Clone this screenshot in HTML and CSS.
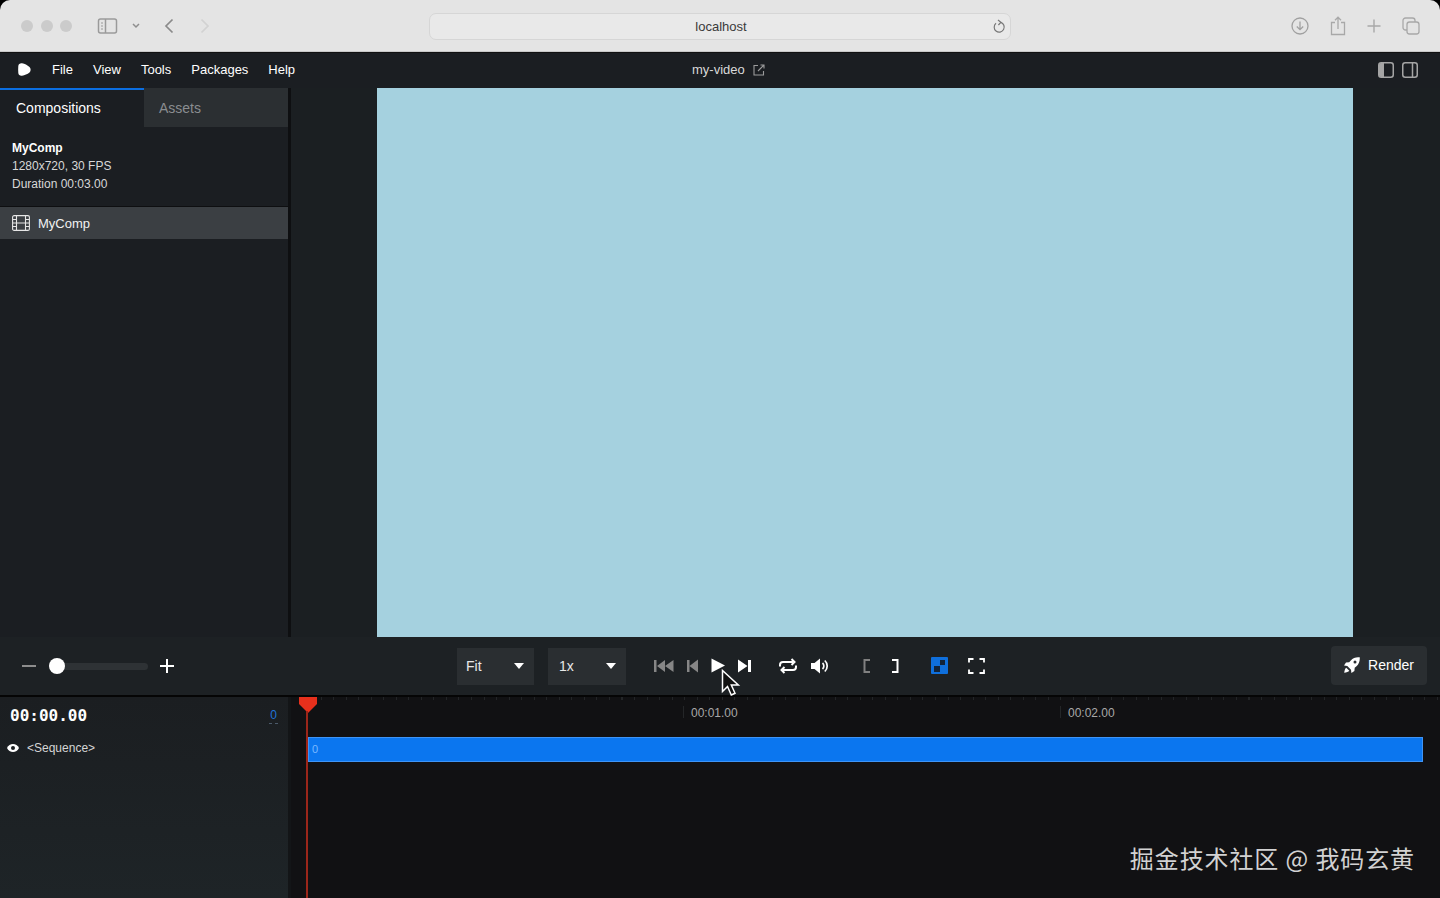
FILE: index.html
```html
<!DOCTYPE html>
<html lang="en">
<head>
<meta charset="utf-8">
<title>my-video</title>
<link rel="stylesheet" href="styles.css">
</head>
<body>
<div class="window">
  <header class="browser">
    <div class="browser-left">
      <div class="lights"><i class="light"></i><i class="light"></i><i class="light"></i></div>
      <svg class="b-sidebar" width="22" height="18" viewBox="0 0 22 18" fill="none" stroke="#9a9a9a" stroke-width="1.5"><rect x="1.5" y="2" width="18" height="14" rx="2"/><path d="M8.5 2v14"/><path d="M4 6h2M4 9h2M4 12h2" stroke-width="1.2"/></svg>
      <svg class="b-chev" width="10" height="8" viewBox="0 0 10 8" fill="none" stroke="#8e8e8e" stroke-width="1.5"><path d="M2 2l3 3 3-3"/></svg>
      <svg class="b-back" width="12" height="18" viewBox="0 0 12 18" fill="none" stroke="#8a8a8a" stroke-width="1.7"><path d="M9.5 2.5L3 9l6.5 6.5"/></svg>
      <svg class="b-fwd" width="12" height="18" viewBox="0 0 12 18" fill="none" stroke="#d2d2d2" stroke-width="1.7"><path d="M2.5 2.5L9 9l-6.5 6.5"/></svg>
    </div>
    <div class="url">
      <span class="url-text">localhost</span>
      <svg class="reload" width="14" height="16" viewBox="0 0 14 16" fill="none" stroke="#777" stroke-width="1.2"><path d="M8.8 3.4A5 5 0 1 1 4 4.3"/><path d="M6 1l2.9 2.4L6.4 6"/></svg>
    </div>
    <div class="browser-right">
      <svg width="18" height="18" viewBox="0 0 18 18" fill="none" stroke="#a0a0a0" stroke-width="1.3"><circle cx="9" cy="9" r="8"/><path d="M9 4.5v8M5.8 9.5L9 12.7l3.2-3.2"/></svg>
      <svg width="16" height="20" viewBox="0 0 16 20" fill="none" stroke="#a8a8a8" stroke-width="1.3"><path d="M5 6.5H1.500v12h13v-12H11"/><path d="M8 13V1.500M5 4.200L8 1.200l3 3"/></svg>
      <svg width="14" height="14" viewBox="0 0 14 14" fill="none" stroke="#a8a8a8" stroke-width="1.4"><path d="M7 .5v13M.5 7h13"/></svg>
      <svg width="18" height="18" viewBox="0 0 18 18" fill="none" stroke="#a8a8a8" stroke-width="1.3"><rect x="1" y="1" width="12" height="12" rx="2.5"/><rect x="5" y="5" width="12" height="12" rx="2.5" fill="#e3e3e3"/></svg>
    </div>
  </header>

  <nav class="menubar">
    <div class="menu-left">
      <svg class="logo" width="13" height="13" viewBox="0 0 13 13"><path d="M4 .3C2 .1.500 1 .3 3c-.2 2.300-.2 4.700 0 7 .2 2 1.800 3 3.700 2.700 2.800-.4 5.300-1.400 7.500-3.200 1.500-1.300 1.500-4.200 0-5.500C9.300 2.200 6.800.7 4 .3z" fill="#fff"/></svg>
      <span class="menu-item">File</span>
      <span class="menu-item">View</span>
      <span class="menu-item">Tools</span>
      <span class="menu-item">Packages</span>
      <span class="menu-item">Help</span>
    </div>
    <div class="menu-title">
      <span>my-video</span>
      <svg width="12" height="12" viewBox="0 0 12 12" fill="none" stroke="#9b9b9b" stroke-width="1.1"><path d="M5 1.500H1v9.500h9.500V7"/><path d="M5 7l6-6M7.500 1H11v3.500"/></svg>
    </div>
    <div class="menu-right">
      <svg width="16" height="16" viewBox="0 0 16 16"><rect x=".75" y=".75" width="14.500" height="14.500" rx="2.500" fill="none" stroke="#a5a5a5" stroke-width="1.500"/><path d="M1 3a2 2 0 0 1 2-2h3v14H3a2 2 0 0 1-2-2z" fill="#a5a5a5"/></svg>
      <svg width="16" height="16" viewBox="0 0 16 16" fill="none" stroke="#a5a5a5" stroke-width="1.500"><rect x=".75" y=".75" width="14.500" height="14.500" rx="2.500"/><path d="M10.500 1v14"/></svg>
    </div>
  </nav>

  <main class="workspace">
    <aside class="sidebar">
      <div class="tabs">
        <div class="tab tab-active">Compositions</div>
        <div class="tab tab-idle">Assets</div>
      </div>
      <div class="comp-info">
        <div class="comp-name">MyComp</div>
        <div>1280x720, 30 FPS</div>
        <div>Duration 00:03.00</div>
      </div>
      <div class="comp-row">
        <svg width="18" height="16" viewBox="0 0 18 16" fill="none" stroke="#e6e6e6" stroke-width="1.100"><rect x=".6" y=".6" width="16.800" height="14.800" rx="1.500"/><path d="M4.500 1v14M13.500 1v14M1 8h16M1 4.500h3.500M1 11.500h3.500M13.500 4.500H17M13.500 11.500H17M4.500 8h9"/></svg>
        <span>MyComp</span>
      </div>
    </aside>
    <section class="stage"><div class="video"></div></section>
  </main>

  <section class="controls">
    <div class="zoom">
      <svg class="z-minus" width="14" height="14" viewBox="0 0 14 14"><path d="M0 7h14" stroke="#8d8d8d" stroke-width="2"/></svg>
      <div class="slider"><i class="knob"></i></div>
      <svg width="14" height="14" viewBox="0 0 14 14"><path d="M0 7h14M7 0v14" stroke="#fff" stroke-width="2"/></svg>
    </div>
    <div class="center-controls">
      <div class="select select-fit"><span>Fit</span><i class="caret"></i></div>
      <div class="select select-speed"><span>1x</span><i class="caret"></i></div>
      <svg class="c-first" width="20" height="14" viewBox="0 0 20 14" fill="#868686"><path d="M0 1h2.500v12H0zM11 1v12L3 7zM19.500 1v12l-8.500-6z"/></svg>
      <svg class="c-prev" width="11" height="14" viewBox="0 0 11 14" fill="#868686"><path d="M0 1h2.500v12H0zM11 0.500v13L2.500 7z"/></svg>
      <svg class="c-play" width="14" height="15" viewBox="0 0 14 15" fill="#fff"><path d="M.5.500v14l13.500-7z"/></svg>
      <svg class="c-next" width="13" height="14" viewBox="0 0 13 14" fill="#fff"><path d="M0 .5v13L9.500 7zM10 1h3v12h-3z"/></svg>
      <svg class="c-loop" width="20" height="16" viewBox="0 0 20 16" fill="none" stroke="#fff" stroke-width="2"><path d="M2 8.500V7a3 3 0 0 1 3-3h10M18 7.500V9a3 3 0 0 1-3 3H5"/><path d="M13.500 1l3 3-3 3M6.500 9l-3 3 3 3"/></svg>
      <svg class="c-vol" width="19" height="16" viewBox="0 0 19 16"><path d="M0 5h3.500L9 .5v15L3.500 11H0z" fill="#fff"/><path d="M11.500 5a4 4 0 0 1 0 6M13.800 2.500a7.500 7.500 0 0 1 0 11" fill="none" stroke="#fff" stroke-width="1.700"/></svg>
      <svg class="c-in" width="8" height="14" viewBox="0 0 8 14" fill="none" stroke="#808080" stroke-width="2"><path d="M7 1H1.500v12H7"/></svg>
      <svg class="c-out" width="8" height="14" viewBox="0 0 8 14" fill="none" stroke="#fff" stroke-width="2"><path d="M1 1h5.500v12H1"/></svg>
      <svg class="c-check" width="17" height="17" viewBox="0 0 17 17"><rect width="17" height="17" rx="1" fill="#0f6fdc"/><rect x="9" y="3" width="5" height="5" fill="#12243a"/><rect x="3" y="9" width="6" height="6" fill="#12243a"/></svg>
      <svg class="c-full" width="17" height="16" viewBox="0 0 17 16" fill="none" stroke="#fff" stroke-width="1.800"><path d="M1 4.500V1h4.500M11.500 1H16v3.500M16 11.500V15h-4.500M5.500 15H1v-3.500"/></svg>
    </div>
    <button class="render" type="button">
      <svg width="16" height="16" viewBox="0 0 16 16" fill="#fff"><path d="M15.700.3c-3.500-.5-6.600.6-8.900 3.100L5.200 5.200 2 5.500 0 8.500l3.300.4L7 12.700l.4 3.300 3-2 .3-3.200 1.800-1.600c2.500-2.300 3.600-5.500 3.200-9.200zM11 6.500a1.500 1.500 0 1 1 0-3 1.500 1.500 0 0 1 0 3zM2.200 10.700C1 11.500.5 13.500.2 15.800c2.300-.3 4.300-.8 5.100-2z"/></svg>
      <span>Render</span>
    </button>
  </section>

  <section class="timeline">
    <div class="tl-left">
      <div class="tl-head">
        <span class="timecode">00:00.00</span>
        <span class="frame">0</span>
      </div>
      <div class="seq-row">
        <svg width="12" height="8" viewBox="0 0 12 8"><path d="M6 0C3.500 0 1.200 1.500 0 4c1.200 2.500 3.500 4 6 4s4.800-1.500 6-4C10.800 1.500 8.500 0 6 0z" fill="#fff"/><circle cx="6" cy="4" r="2" fill="#1b1f22"/></svg>
        <span>&lt;Sequence&gt;</span>
      </div>
    </div>
    <div class="tl-right">
      <div class="ruler">
        <span class="mark mark-1">00:01.00</span>
        <span class="mark mark-2">00:02.00</span>
      </div>
      <div class="track"><span>0</span></div>
      <div class="playhead">
        <svg width="18" height="16" viewBox="0 0 18 16"><path d="M0 0h18v7l-9 9-9-9z" fill="#e8301c"/></svg>
      </div>
    </div>
    <div class="watermark">掘金技术社区 @ 我码玄黄</div>
  </section>

  <svg class="cursor" width="20" height="28" viewBox="0 0 20 28"><path d="M1.500 1.500v21l5-5 3.800 8.500 3.700-1.700-3.700-8.300h7z" fill="#111" stroke="#fff" stroke-width="1.500"/></svg>
</div>
</body>
</html>
```
FILE: styles.css
```css
* { box-sizing: border-box; }
html, body { margin: 0; height: 100%; background: #000; overflow: hidden; }
body { font-family: "Liberation Sans", Arial, sans-serif; }
.window { position: relative; width: 1440px; height: 898px; display: flex; flex-direction: column; overflow: hidden; }

.browser { height: 52px; flex: none; display: flex; align-items: center; background: #e4e4e4; border-radius: 10px 10px 0 0; border-bottom: 1px solid #c9c9c9; }
.browser-left { width: 429px; flex: none; display: flex; align-items: center; padding-left: 21px; }
.lights { display: flex; gap: 7.5px; }
.light { width: 12px; height: 12px; border-radius: 50%; background: #cbcbcb; }
.b-sidebar { margin-left: 25px; }
.b-chev { margin-left: 12px; }
.b-back { margin-left: 22px; }
.b-fwd { margin-left: 24px; }
.url { width: 582px; height: 27px; margin-top: 1px; flex: none; position: relative; display: flex; align-items: center; justify-content: center; background: #e9e9e9; border: 1px solid #d6d6d6; border-radius: 7px; }
.url-text { font-size: 13px; color: #3a3a3a; margin-left: 2px; }
.reload { position: absolute; right: 4px; top: 5px; }
.browser-right { flex: 1; display: flex; align-items: center; padding-left: 280px; gap: 21px; }

.menubar { height: 36px; flex: none; display: flex; align-items: center; justify-content: space-between; background: #1b1e22; color: #fff; font-size: 13px; position: relative; border-top: 1px solid #111; padding-bottom: 2px; }
.menu-left { display: flex; align-items: center; padding-left: 18px; }
.logo { margin-right: 15px; }
.menu-item { margin-left: 6px; margin-right: 14px; }
.menu-title { position: absolute; left: 692px; top: 9px; display: flex; align-items: center; gap: 8px; color: #d9d9d9; font-size: 13px; }
.menu-right { display: flex; gap: 8px; padding-right: 22px; }

.workspace { height: 549px; flex: none; display: flex; background: #1b1f22; }
.sidebar { width: 291px; flex: none; border-right: 3px solid #0e0f11; background: #1b1e22; }
.tabs { display: flex; height: 39px; }
.tab { width: 144px; font-size: 14px; padding: 12px 0 0 16px; }
.tab-active { color: #fff; border-top: 2px solid #0b6ee0; padding-top: 10px; background: #1b1e22; }
.tab-idle { color: #8a8d90; background: #2b2f32; padding-top: 12px; padding-left: 15px; }
.comp-info { height: 80px; padding: 12px 12px 0; font-size: 12px; line-height: 18px; color: #d8d8d8; border-bottom: 1px solid #0e0f11; }
.comp-name { font-weight: 700; color: #fff; }
.comp-row { height: 32px; display: flex; align-items: center; gap: 8px; padding-left: 12px; background: #3b3f43; color: #f2f2f2; font-size: 13px; }
.stage { flex: 1; padding-left: 86px; }
.video { width: 976px; height: 549px; background: #a5d1df; }

.controls { height: 58px; flex: none; display: flex; align-items: center; position: relative; background: #1d2124; padding: 0 13px 0 22px; justify-content: space-between; }
.zoom { display: flex; align-items: center; }
.slider { width: 99px; height: 7px; margin: 0 12px 0 13px; background: #2e3235; border-radius: 4px; position: relative; }
.knob { position: absolute; left: 0; top: -5px; width: 16px; height: 16px; border-radius: 50%; background: #fff; }
.center-controls { position: absolute; left: 457px; top: 11px; height: 37px; display: flex; align-items: center; }
.center-controls svg { margin-bottom: 2px; }
.select { height: 37px; display: flex; align-items: center; justify-content: space-between; padding: 0 10px 2px; background: #2a2e31; color: #e8e8e8; font-size: 14px; }
.select-fit { width: 77px; padding-left: 9px; }
.select-speed { width: 78px; margin-left: 14px; padding-left: 11px; }
.caret { width: 0; height: 0; border-left: 5.500px solid transparent; border-right: 5.500px solid transparent; border-top: 6px solid #fff; }
.c-first { margin-left: 28px; }
.c-prev { margin-left: 13px; }
.c-play { margin-left: 13px; }
.c-next { margin-left: 13px; }
.c-loop { margin-left: 27px; }
.c-vol { margin-left: 13px; }
.c-in { margin-left: 33px; }
.c-out { margin-left: 20px; }
.c-check { margin-left: 32px; }
.c-full { margin-left: 20px; }
.render { margin-left: auto; width: 96px; height: 39px; border: 0; border-radius: 4px; background: #2a2e31; color: #fff; font: 14px "Liberation Sans", Arial, sans-serif; display: flex; align-items: center; justify-content: center; gap: 8px; padding: 0 0 2px; margin-top: -1px; }

.timeline { flex: 1; display: flex; position: relative; border-top: 2px solid #050505; background: #111113; }
.tl-left { width: 291px; flex: none; background: linear-gradient(180deg, #1b1e21, #1e2427); border-right: 3px solid #131517; }
.tl-head { height: 36px; display: flex; align-items: center; justify-content: space-between; padding: 0 10px; }
.timecode { font: 700 16px "DejaVu Sans Mono", monospace; color: #fff; }
.frame { font: 12px "Liberation Sans", sans-serif; color: #1f74d8; border-bottom: 1px dashed #4b5a6a; line-height: 15px; margin-top: 2px; padding: 0 1px; }
.seq-row { display: flex; align-items: center; gap: 8px; padding: 0 0 0 7px; margin-top: 2px; height: 26px; color: #d6d6d6; font-size: 12px; }
.tl-right { flex: 1; position: relative; min-width: 0; }
.ruler { height: 40px; position: relative; background-image: repeating-linear-gradient(90deg, #232527 0 1px, transparent 1px 12.540px); background-size: 100% 3px; background-repeat: no-repeat; background-position: 17px 0; }
.mark { position: absolute; top: 9px; font-size: 12px; color: #a8a8a8; padding-left: 7px; height: 12px; line-height: 14px; border-left: 1px solid #242628; }
.mark-1 { left: 392px; }
.mark-2 { left: 769px; }
.track { height: 25px; margin: 0 17px; background: #0b76ef; border: 1px solid #3f94f5; padding-left: 3px; font-size: 11px; line-height: 22px; color: #7ab8ff; }
.playhead { position: absolute; left: 8px; top: 0; width: 18px; height: 201px; }
.playhead svg { display: block; }
.playhead::after { content: ""; position: absolute; left: 7px; top: 14px; bottom: 0; width: 2px; background: #9c261a; }
.watermark { position: absolute; right: 25px; bottom: 24px; font: 24px "Noto Sans CJK SC", sans-serif; color: #d2d2d2; line-height: 32px; letter-spacing: .9px; }
.cursor { position: absolute; left: 721px; top: 669px; }
```
